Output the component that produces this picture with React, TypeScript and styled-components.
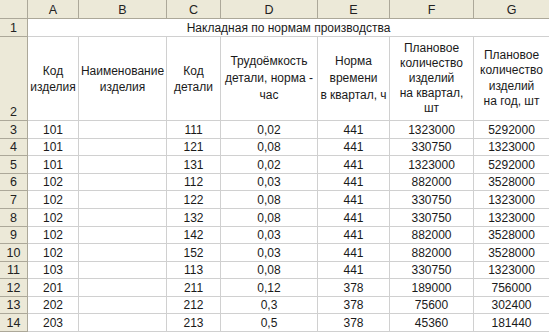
import React from 'react';
import styled, { createGlobalStyle } from 'styled-components';

const GlobalStyle = createGlobalStyle`
  html, body {
    margin: 0;
    padding: 0;
    background: #ffffff;
    overflow: hidden;
  }
  body {
    font-family: "Liberation Sans", Arial, sans-serif;
    font-size: 12px;
    color: #1a1a1a;
  }
`;

const colWidths = [28, 51, 88, 54, 97, 72, 84, 76];
const dataHeights = [18, 17, 18, 17, 18, 18, 17, 18, 17, 18, 17, 18];

const Sheet = styled.div`
  display: grid;
  grid-template-columns: ${colWidths.map((w) => `${w}px`).join(' ')};
  grid-template-rows: 19px 18px 84px ${dataHeights.map((h) => `${h}px`).join(' ')};
  width: 549px;
  height: 332px;
  overflow: hidden;
`;

const HeadBase = styled.div`
  box-sizing: border-box;
  background: #ece9d8;
  border-right: 1px solid #aca899;
  border-bottom: 1px solid #aca899;
  display: flex;
  justify-content: center;
  color: #222222;
  font-size: 12.5px;
`;

const Corner = styled(HeadBase)``;

const ColHead = styled(HeadBase)`
  align-items: center;
  padding-top: 1px;
`;

const RowHead = styled(HeadBase)<{ $bottom?: boolean }>`
  align-items: ${(p) => (p.$bottom ? 'flex-end' : 'center')};
  padding-bottom: ${(p) => (p.$bottom ? '1px' : '0')};
`;

const Cell = styled.div<{ $span?: number; $lh?: number }>`
  box-sizing: border-box;
  grid-column: span ${(p) => p.$span ?? 1};
  border-right: 1px solid #d0d0d0;
  border-bottom: 1px solid #d0d0d0;
  display: flex;
  align-items: center;
  justify-content: center;
  text-align: center;
  line-height: ${(p) => p.$lh ?? 16}px;
  white-space: pre-line;
  overflow: hidden;
`;

const letters = ['A', 'B', 'C', 'D', 'E', 'F', 'G'];

const headers: { text: string; lh: number }[] = [
  { text: 'Код\nизделия', lh: 16 },
  { text: 'Наименование\nизделия', lh: 16 },
  { text: 'Код\nдетали', lh: 16 },
  { text: 'Трудоёмкость\nдетали, норма -\nчас', lh: 17 },
  { text: 'Норма\nвремени\nв квартал, ч', lh: 17 },
  { text: 'Плановое\nколичество\nизделий\nна квартал,\nшт', lh: 15 },
  { text: 'Плановое\nколичество\nизделий\nна год, шт', lh: 15.5 },
];

const rows: string[][] = [
  ['101', '', '111', '0,02', '441', '1323000', '5292000'],
  ['101', '', '121', '0,08', '441', '330750', '1323000'],
  ['101', '', '131', '0,02', '441', '1323000', '5292000'],
  ['102', '', '112', '0,03', '441', '882000', '3528000'],
  ['102', '', '122', '0,08', '441', '330750', '1323000'],
  ['102', '', '132', '0,08', '441', '330750', '1323000'],
  ['102', '', '142', '0,03', '441', '882000', '3528000'],
  ['102', '', '152', '0,03', '441', '882000', '3528000'],
  ['103', '', '113', '0,08', '441', '330750', '1323000'],
  ['201', '', '211', '0,12', '378', '189000', '756000'],
  ['202', '', '212', '0,3', '378', '75600', '302400'],
  ['203', '', '213', '0,5', '378', '45360', '181440'],
];

const App: React.FC = () => {
  return (
    <>
      <GlobalStyle />
      <Sheet>
        <Corner />
        {letters.map((l) => (
          <ColHead key={l}>{l}</ColHead>
        ))}

        <RowHead>1</RowHead>
        <Cell $span={7}>Накладная по нормам производства</Cell>

        <RowHead $bottom>2</RowHead>
        {headers.map((h, i) => (
          <Cell key={i} $lh={h.lh}>
            {h.text}
          </Cell>
        ))}

        {rows.map((r, ri) => (
          <React.Fragment key={ri}>
            <RowHead>{ri + 3}</RowHead>
            {r.map((v, ci) => (
              <Cell key={ci}>{v}</Cell>
            ))}
          </React.Fragment>
        ))}
      </Sheet>
    </>
  );
};

export default App;
